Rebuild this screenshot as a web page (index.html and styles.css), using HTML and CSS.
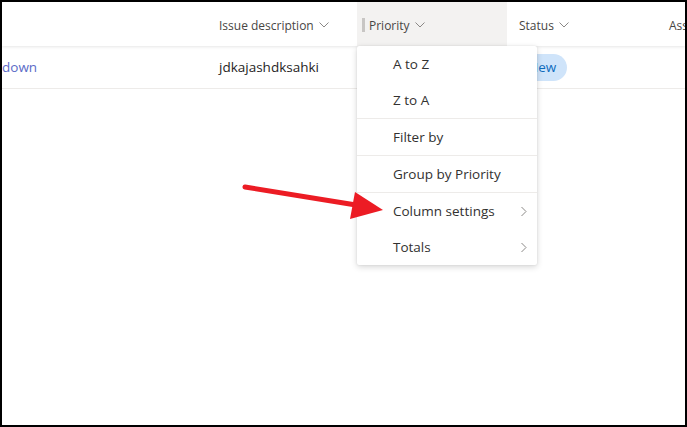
FILE: index.html
```html
<!DOCTYPE html>
<html lang="en">

<head>
    <meta charset="UTF-8">
    <title>Issues list - column menu</title>
    <link rel="stylesheet" href="styles.css">
</head>

<body>
    <div class="frame">
        <div class="list">
            <div class="row header">
                <div class="cell col-title"></div>
                <div class="cell col-desc">Issue description <svg class="chev" viewBox="0 0 10 6"><path d="M0.5 0.5 L5 5 L9.5 0.5" /></svg></div>
                <div class="cell col-priority active"><span class="grip"></span>Priority <svg class="chev" viewBox="0 0 10 6"><path d="M0.5 0.5 L5 5 L9.5 0.5" /></svg></div>
                <div class="cell col-status">Status <svg class="chev" viewBox="0 0 10 6"><path d="M0.5 0.5 L5 5 L9.5 0.5" /></svg></div>
                <div class="cell col-assigned">Ass</div>
            </div>
            <div class="row item">
                <div class="cell col-title"><a class="link" href="#">down</a></div>
                <div class="cell col-desc text">jdkajashdksahki</div>
                <div class="cell col-priority"></div>
                <div class="cell col-status"><span class="pill">New</span></div>
                <div class="cell col-assigned"></div>
            </div>
        </div>

        <!-- column header menu -->
        <div class="menu">
            <div class="menu-item">A to Z</div>
            <div class="menu-item">Z to A</div>
            <div class="menu-sep"></div>
            <div class="menu-item">Filter by</div>
            <div class="menu-sep"></div>
            <div class="menu-item">Group by Priority</div>
            <div class="menu-sep"></div>
            <div class="menu-item">Column settings <svg class="chev-right" viewBox="0 0 6 10"><path d="M0.5 0.5 L5 5 L0.5 9.5" /></svg></div>
            <div class="menu-item">Totals <svg class="chev-right" viewBox="0 0 6 10"><path d="M0.5 0.5 L5 5 L0.5 9.5" /></svg></div>
        </div>

        <svg class="arrow" viewBox="0 0 687 427">
            <line x1="245" y1="187" x2="356" y2="205" stroke="#ec1c24" stroke-width="5" stroke-linecap="round" />
            <polygon points="355,192 383,210 350,219" fill="#ec1c24" />
        </svg>
    </div>
</body>

</html>
```

FILE: styles.css
```css
body {
    margin: 0;
    font-family: "Open Sans", "Noto Sans", sans-serif;
    background: #fff;
}

.frame {
    position: relative;
    width: 687px;
    height: 427px;
    box-sizing: border-box;
    border: 2px solid #000;
    overflow: hidden;
    background: #fff;
}

.list {
    display: flex;
    flex-direction: column;
}

.row {
    display: flex;
    align-items: stretch;
}

.header {
    height: 44px;
    box-shadow: 0 1px 3px rgba(0, 0, 0, 0.1);
    position: relative;
    z-index: 1;
}

.item {
    height: 42px;
    border-bottom: 1px solid #edebe9;
}

.cell {
    display: flex;
    align-items: center;
    padding-left: 12px;
    box-sizing: border-box;
    flex-shrink: 0;
}

.header .cell {
    font-size: 12px;
    color: #484644;
    padding-top: 2px;
}

.col-title {
    width: 205px;
    padding-left: 0;
}

.col-desc {
    width: 150px;
}

.col-priority {
    width: 150px;
}

.col-status {
    width: 150px;
}

.col-assigned {
    width: 150px;
}

.header .active {
    background: #f3f2f1;
    padding-left: 5px;
}

.grip {
    display: inline-block;
    width: 3px;
    height: 14px;
    background: #c8c6c4;
    margin-right: 4px;
}

.chev {
    width: 10px;
    height: 6px;
    margin-left: 5px;
    fill: none;
    stroke: #8a8886;
    stroke-width: 1;
}

.link {
    color: #5b6bc7;
    text-decoration: none;
    font-size: 13.5px;
}

.text {
    font-size: 13.5px;
    color: #252423;
}

.pill {
    display: inline-block;
    background: #cfe4fa;
    color: #0f6cbd;
    font-size: 13.5px;
    line-height: 27px;
    padding: 0 11px;
    border-radius: 14px;
    margin-left: -2px;
}

.menu {
    position: absolute;
    left: 355px;
    top: 44px;
    width: 180px;
    background: #fff;
    border-radius: 2px;
    box-shadow: 0 2px 6px rgba(0, 0, 0, 0.16), 0 0 2px rgba(0, 0, 0, 0.1);
    z-index: 2;
}

.menu-item {
    height: 36px;
    display: flex;
    align-items: center;
    padding-left: 36px;
    padding-right: 10px;
    font-size: 13.5px;
    color: #323130;
}

.menu-sep {
    height: 1px;
    background: #edebe9;
}

.chev-right {
    width: 6px;
    height: 11px;
    margin-left: auto;
    fill: none;
    stroke: #8a8886;
    stroke-width: 1;
}

.arrow {
    position: absolute;
    left: -2px;
    top: -2px;
    width: 687px;
    height: 427px;
    z-index: 3;
    pointer-events: none;
}
```
